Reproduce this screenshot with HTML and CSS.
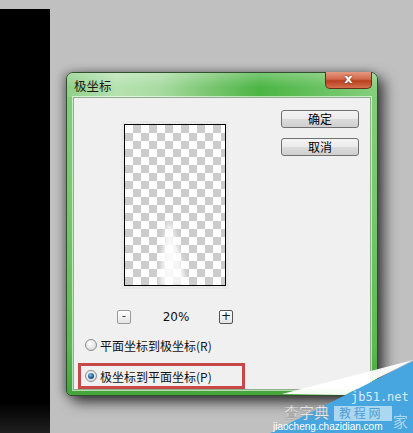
FILE: index.html
```html
<!DOCTYPE html>
<html lang="zh">
<head>
<meta charset="utf-8">
<title>极坐标</title>
<link rel="stylesheet" href="styles.css">
</head>
<body>
<div class="screen">
  <div class="black"></div>
  <div class="dialog">
    <div class="titlebar">
      <span class="title">极坐标</span>
      <div class="close">x</div>
    </div>
    <div class="client">
      <div class="top">
        <div class="preview-col">
          <div class="preview">
            <svg class="ghost" width="100" height="160" viewBox="0 0 100 160">
              <defs>
                <filter id="b" x="-50%" y="-20%" width="200%" height="140%"><feGaussianBlur stdDeviation="2.2 1.5"/></filter>
                <linearGradient id="g" x1="0" y1="0" x2="0" y2="1">
                  <stop offset="0" stop-color="#fff" stop-opacity="0.2"/>
                  <stop offset="0.45" stop-color="#fff" stop-opacity="0.85"/>
                  <stop offset="1" stop-color="#fff" stop-opacity="0.75"/>
                </linearGradient>
              </defs>
              <g filter="url(#b)" fill="url(#g)">
                <polygon points="41,92 47,92 54,125 62,160 35,160 38,125"/>
                <rect x="43" y="100" width="3" height="60" fill="#fff"/>
              </g>
            </svg>
          </div>
          <div class="zoom-row">
            <span class="zbtn minus">-</span>
            <span class="zval">20%</span>
            <span class="zbtn plus">+</span>
          </div>
        </div>
        <div class="btn-col">
          <div class="btn">确定</div>
          <div class="btn">取消</div>
        </div>
      </div>
      <div class="radios">
        <div class="radio-row"><span class="radio"></span><span>平面坐标到极坐标(R)</span></div>
        <div class="radio-row marked"><span class="radio checked"></span><span>极坐标到平面坐标(P)</span></div>
      </div>
    </div>
  </div>
  <svg class="watermark" width="153" height="78" viewBox="0 0 153 78">
    <polygon points="153,6 153,78 10,78" fill="#47a6e0"/>
    <polygon points="22,39 153,5 85,40" fill="#ffffff" opacity="0.95"/>
    <text x="24" y="63" class="wm-cn">查字典</text>
    <rect x="74" y="51" width="58" height="15" fill="#ffffff" opacity="0.55"/>
    <text x="79" y="63" class="wm-box">教 程 网</text>
    <text x="91" y="46" class="wm-jb">jb51.net</text>
    <text x="133" y="72" class="wm-big">家</text>
    <text x="13" y="75" class="wm-url">jiaocheng.chazidian.com</text>
  </svg>
</div>
</body>
</html>
```
FILE: styles.css
```css
* { box-sizing: border-box; }
html, body { margin: 0; padding: 0; }
body {
  width: 413px;
  height: 433px;
  overflow: hidden;
  background: #c0c0c0;
  font-family: "Noto Sans CJK SC", "DejaVu Sans", sans-serif;
  font-size: 12px;
  color: #111;
}
.screen {
  position: relative;
  width: 413px;
  height: 433px;
  display: flex;
  align-items: flex-start;
}
.black {
  width: 50px;
  height: 424px;
  margin-top: 9px;
  background: linear-gradient(to top, rgba(90,90,90,0.35), rgba(0,0,0,0) 30px), #000;
  flex: none;
}
.dialog {
  flex: none;
  width: 312px;
  height: 324px;
  margin: 72px 0 0 16px;
  border: 1px solid #32502f;
  border-radius: 7px 7px 5px 5px;
  padding: 0 6px 5px 6px;
  display: flex;
  flex-direction: column;
  background: linear-gradient(to bottom, #86cd7f 0%, #79c670 40%, #5cb852 85%, #45a43a 100%);
  box-shadow: 6px 6px 14px rgba(0,0,0,0.7), -3px 0 8px rgba(0,0,0,0.3);
}
.titlebar {
  height: 27px;
  display: flex;
  align-items: flex-start;
  justify-content: space-between;
  margin: 0 -6px;
  padding: 0 5px 0 7px;
  border-radius: 6px 6px 0 0;
  background:
    linear-gradient(to bottom, rgba(255,255,255,0.25), rgba(255,255,255,0) 60%),
    linear-gradient(90deg, #8fd088 0%, #b6e2b0 16%, #a8dba1 30%, #74c46b 48%, #4cb544 62%, #62bf5a 78%, #86cf7e 100%);
}
.title {
  margin-top: 5px;
  font-size: 12.5px;
  color: #1a1a1a;
  line-height: 16px;
}
.close {
  width: 47px;
  height: 17px;
  margin-top: -1px;
  border: 1px solid #6a2c1c;
  border-top: none;
  border-radius: 0 0 5px 5px;
  background: linear-gradient(to bottom, #e59a80 0%, #d0684a 45%, #b8401f 55%, #d6704e 100%);
  color: #fff;
  font-family: "DejaVu Sans", sans-serif;
  font-weight: bold;
  font-size: 13px;
  line-height: 14px;
  text-align: center;
  text-shadow: 0 0 2px #5a1a0a;
}
.client {
  flex: 1;
  background: #f0f0f0;
  border: 1px solid #8fae8b;
  box-shadow: 0 0 0 1px rgba(255,255,255,0.6);
  display: flex;
  flex-direction: column;
  position: relative;
}
.top {
  display: flex;
  align-items: flex-start;
}
.preview-col {
  width: 116px;
  margin-left: 43px;
  padding-top: 26px;
  display: flex;
  flex-direction: column;
  align-items: center;
}
.preview {
  position: relative;
  width: 102px;
  height: 162px;
  border: 1px solid #000;
  background: repeating-conic-gradient(#cccccc 0 25%, #ffffff 0 50%) 0 0 / 16px 16px;
  box-shadow: 0 0 0 3px #e9e9e9;
}
.ghost {
  position: absolute;
  left: 0;
  top: 0;
}
.zoom-row {
  width: 116px;
  height: 14px;
  margin-top: 24px;
  display: flex;
  align-items: center;
  justify-content: space-between;
}
.zbtn {
  width: 14px;
  height: 14px;
  border: 1px solid #9a9a9a;
  border-radius: 2px;
  background: linear-gradient(#ffffff, #e4e4e4);
  font-family: "DejaVu Sans", sans-serif;
  font-size: 12px;
  line-height: 11px;
  text-align: center;
  color: #444;
}
.zbtn.plus { border-color: #555; color: #111; }
.zval {
  font-family: "DejaVu Sans", sans-serif;
  font-size: 12px;
  color: #111;
  margin-left: 2px;
}
.btn-col {
  margin-left: 48px;
  padding-top: 12px;
  display: flex;
  flex-direction: column;
  gap: 10px;
}
.btn {
  width: 78px;
  height: 18px;
  border: 1px solid #707070;
  border-radius: 3px;
  background: linear-gradient(to bottom, #f4f4f4 0%, #ebebeb 50%, #dcdcdc 51%, #cfcfcf 100%);
  font-size: 12px;
  line-height: 16px;
  text-align: center;
  color: #000;
}
.radios {
  margin-top: 8px;
  display: flex;
  flex-direction: column;
  gap: 5px;
}
.radio-row {
  width: 167px;
  height: 26px;
  margin-left: 4px;
  padding-left: 7px;
  display: flex;
  align-items: center;
  gap: 3px;
  font-size: 12px;
  color: #111;
}
.radio-row.marked {
  box-shadow: inset 0 0 0 3px #c84747;
}
.radio {
  width: 12px;
  height: 12px;
  border-radius: 50%;
  border: 1px solid #8a8c8e;
  background: radial-gradient(circle at 40% 35%, #ffffff 0%, #eaeaea 45%, #cfcfcf 100%);
  position: relative;
  flex: none;
}
.radio.checked::after {
  content: "";
  position: absolute;
  left: 2px;
  top: 2px;
  width: 6px;
  height: 6px;
  border-radius: 50%;
  background: radial-gradient(circle at 40% 35%, #8cc6ee 0%, #2a6a9c 45%, #0f3354 100%);
}
.watermark {
  position: absolute;
  left: 260px;
  top: 355px;
}
.wm-cn {
  font-family: "Noto Sans CJK SC", sans-serif;
  font-size: 15px;
  fill: #ffffff;
  stroke: #9a9a9a;
  stroke-width: 0.4;
}
.wm-box {
  font-family: "Noto Sans CJK SC", sans-serif;
  font-size: 12px;
  fill: #4c9fd6;
}
.wm-jb {
  font-family: "DejaVu Sans Mono", monospace;
  font-size: 12px;
  fill: #d6ecfa;
}
.wm-big {
  font-family: "Noto Sans CJK SC", sans-serif;
  font-size: 15px;
  fill: #ffffff;
  opacity: 0.55;
}
.wm-url {
  font-family: "Liberation Sans", sans-serif;
  font-size: 10px;
  fill: #ffffff;
}
```
